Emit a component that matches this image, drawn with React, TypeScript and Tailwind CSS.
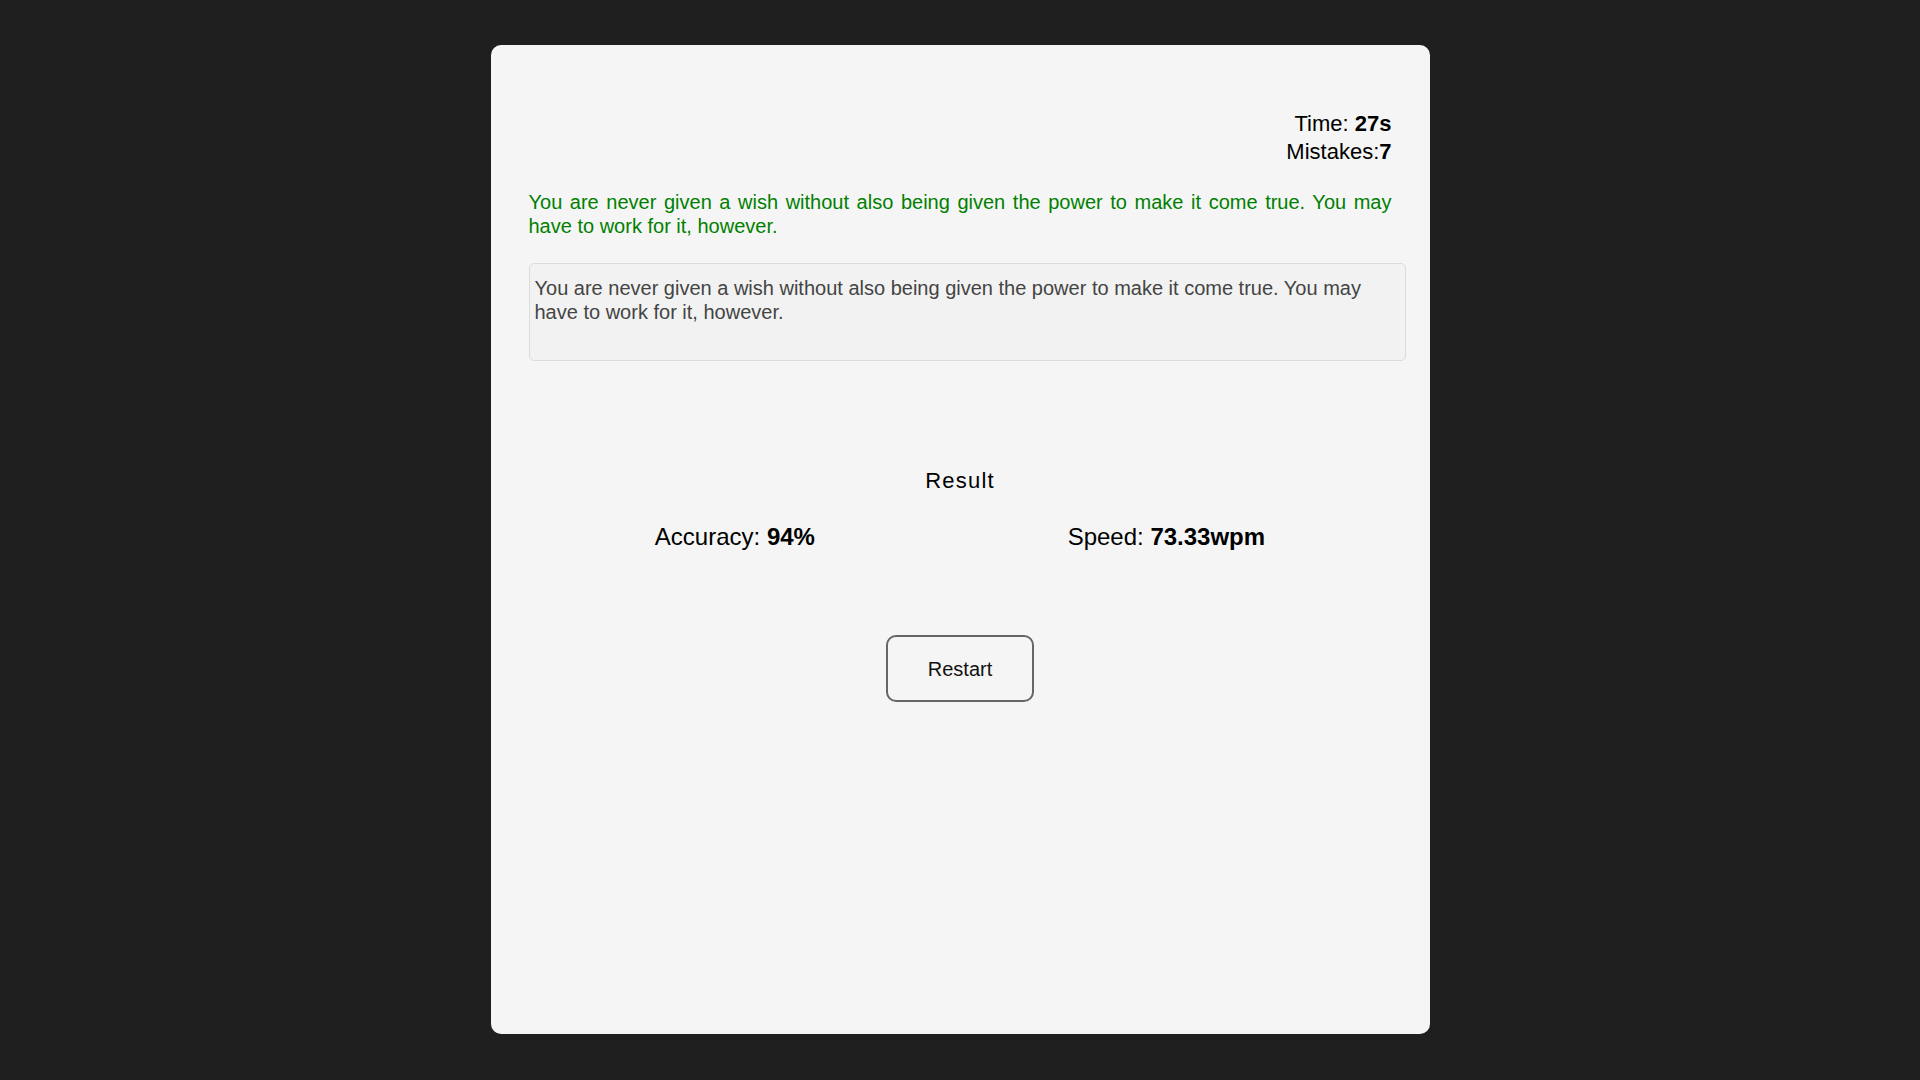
const quote =
  "You are never given a wish without also being given the power to make it come true. You may have to work for it, however.";

export default function App() {
  return (
    <div className="min-h-screen bg-[#1f1f1f] flex justify-center pt-[45px] font-['Liberation_Sans',Arial,sans-serif]">
      <div className="w-[939px] h-[989px] bg-[#f5f5f5] rounded-[10px] px-[38px] pt-[65px] text-black">
        {/* stats */}
        <div className="text-right text-[22px] leading-[28px]">
          <div>
            Time: <b>27s</b>
          </div>
          <div>
            Mistakes:<b>7</b>
          </div>
        </div>

        {/* quote to type */}
        <p className="mt-[24px] text-[20px] leading-[24px] text-justify text-[#008000]">{quote}</p>

        {/* typed input */}
        <div className="mt-[25px] w-[877px] h-[98px] border border-[#dcdcdc] rounded-[5px] bg-[#f2f2f2] pt-[12px] px-[5px] text-[20px] leading-[24px] text-[#444]">
          {quote}
        </div>

        {/* result */}
        <div className="mt-[103px] text-center text-[22px] tracking-[1.2px]">Result</div>
        <div className="mt-[22px] flex justify-around text-[24px]">
          <div>
            Accuracy: <b>94%</b>
          </div>
          <div>
            Speed: <b>73.33wpm</b>
          </div>
        </div>

        <div className="mt-[80px] flex justify-center">
          <button className="w-[148px] h-[67px] border-2 border-[#666] rounded-[10px] text-[20px] text-[#111] bg-transparent">
            Restart
          </button>
        </div>
      </div>
    </div>
  );
}
